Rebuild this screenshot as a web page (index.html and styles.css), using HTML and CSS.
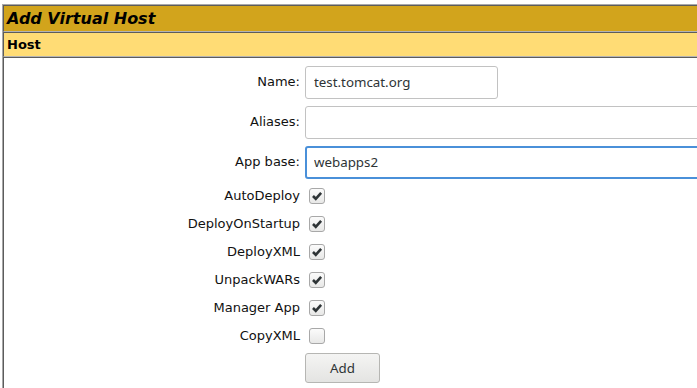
FILE: index.html
```html
<!DOCTYPE html>
<html>
<head>
<meta charset="utf-8">
<title>Add Virtual Host</title>
<link rel="stylesheet" href="styles.css">
</head>
<body>
<div class="panel">
  <div class="cell title">Add Virtual Host</div>
  <div class="cell header">Host</div>
  <div class="cell body">
    <form class="form">
      <div class="row text-row">
        <label class="label">Name:</label>
        <input class="field short" type="text" value="test.tomcat.org">
      </div>
      <div class="row text-row">
        <label class="label">Aliases:</label>
        <input class="field long" type="text" value="">
      </div>
      <div class="row text-row">
        <label class="label">App base:</label>
        <input class="field long focused" type="text" value="webapps2">
      </div>
      <div class="row check-row">
        <span class="label">AutoDeploy</span>
        <span class="check on"><svg viewBox="0 0 16 16" width="16" height="16"><path d="M3.4 8 L6.6 11.2 L12.7 4.4" /></svg></span>
      </div>
      <div class="row check-row">
        <span class="label">DeployOnStartup</span>
        <span class="check on"><svg viewBox="0 0 16 16" width="16" height="16"><path d="M3.4 8 L6.6 11.2 L12.7 4.4" /></svg></span>
      </div>
      <div class="row check-row">
        <span class="label">DeployXML</span>
        <span class="check on"><svg viewBox="0 0 16 16" width="16" height="16"><path d="M3.4 8 L6.6 11.2 L12.7 4.4" /></svg></span>
      </div>
      <div class="row check-row">
        <span class="label">UnpackWARs</span>
        <span class="check on"><svg viewBox="0 0 16 16" width="16" height="16"><path d="M3.4 8 L6.6 11.2 L12.7 4.4" /></svg></span>
      </div>
      <div class="row check-row">
        <span class="label">Manager App</span>
        <span class="check on"><svg viewBox="0 0 16 16" width="16" height="16"><path d="M3.4 8 L6.6 11.2 L12.7 4.4" /></svg></span>
      </div>
      <div class="row check-row">
        <span class="label">CopyXML</span>
        <span class="check"></span>
      </div>
      <div class="row button-row">
        <span class="label"></span>
        <button class="btn" type="button">Add</button>
      </div>
    </form>
  </div>
</div>
</body>
</html>
```

FILE: styles.css
```css
html, body {
  margin: 0;
  padding: 0;
  background: #ffffff;
  overflow: hidden;
}

body {
  width: 697px;
  height: 388px;
  font-family: "DejaVu Sans", Verdana, sans-serif;
  color: #000;
}

.panel {
  margin: 4px 0 0 2px;
  width: 695px;
  overflow: hidden;
  border-top: 1px solid #a8a8a8;
  border-left: 1px solid #a8a8a8;
}

.cell {
  border-top: 1px solid #5c5c5c;
  border-left: 1px solid #5c5c5c;
  border-bottom: 1px solid #b4b4b4;
  padding: 3px;
}

.title {
  background: #D2A41C;
  font-size: 16px;
  line-height: 19px;
  font-weight: bold;
  font-style: italic;
}

.header {
  background: #FFDC75;
  font-size: 13px;
  line-height: 17px;
  font-weight: bold;
}

.body {
  padding: 0;
  border-bottom: none;
  height: 340px;
  overflow: hidden;
}

.form {
  margin: 4px 0 0 182px;
  display: flex;
  flex-direction: column;
}

.row {
  display: flex;
  align-items: center;
  gap: 5px;
}

.label {
  width: 114px;
  flex: none;
  text-align: right;
  font-size: 13px;
  line-height: 16px;
  color: #111;
}

.text-row {
  height: 40px;
}

.field {
  box-sizing: border-box;
  flex: none;
  height: 33px;
  margin: 0;
  padding: 0 8px;
  border: 1px solid #c2c2c2;
  border-radius: 3px;
  background: #fff;
  font-family: "Noto Sans", "Open Sans", sans-serif;
  font-size: 13.33px;
  color: #2e3436;
  outline: none;
}

.short {
  width: 193px;
}

.long {
  width: 430px;
}

.focused {
  border: 2px solid #4a90d9;
  padding: 0 7px;
}

.check-row {
  height: 28px;
}

.check {
  box-sizing: border-box;
  width: 16px;
  height: 16px;
  margin-left: 4px;
  border: 1px solid #a8a8a8;
  border-radius: 3px;
  background: linear-gradient(#fbfbfb, #e8e8e7);
  display: flex;
  align-items: center;
  justify-content: center;
}

.check svg {
  display: block;
  width: 14px;
  height: 14px;
}

.check path {
  fill: none;
  stroke: #2e3436;
  stroke-width: 3;
  stroke-linecap: butt;
  stroke-linejoin: miter;
}

.button-row {
  margin-top: 3px;
}

.btn {
  box-sizing: border-box;
  width: 75px;
  height: 30px;
  margin: 0;
  border: 1px solid #b6b6b3;
  border-radius: 3px;
  background: linear-gradient(#f4f4f3, #e4e4e2);
  font-family: "Noto Sans", "Open Sans", sans-serif;
  font-size: 13.33px;
  color: #2e3436;
  padding: 0;
}
```
